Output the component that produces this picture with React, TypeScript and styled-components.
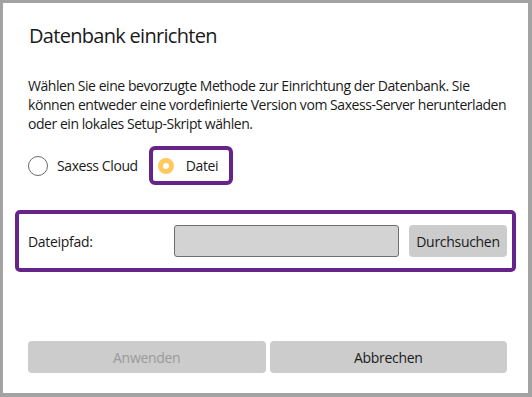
import React, { useState } from "react";
import styled, { createGlobalStyle } from "styled-components";

const GlobalStyle = createGlobalStyle`
  html, body {
    margin: 0;
    padding: 0;
  }
  body {
    font-family: "Open Sans", "Noto Sans", sans-serif;
    color: #1a1a1a;
  }
`;

type Source = "cloud" | "file";

function Radio({
  label,
  checked,
  onSelect,
}: {
  label: string;
  checked: boolean;
  onSelect: () => void;
}) {
  return (
    <StyledRadio onClick={onSelect}>
      <StyledRadioCircle $checked={checked} />
      <span>{label}</span>
    </StyledRadio>
  );
}

function App() {
  const [source, setSource] = useState<Source>("file");

  return (
    <StyledFrame>
      <GlobalStyle />
      <StyledDialog>
        <StyledTitle>Datenbank einrichten</StyledTitle>
        <StyledText>
          Wählen Sie eine bevorzugte Methode zur Einrichtung der Datenbank. Sie
          <br />
          können entweder eine vordefinierte Version vom Saxess-Server
          herunterladen
          <br />
          oder ein lokales Setup-Skript wählen.
        </StyledText>
        <StyledRadioRow>
          <Radio
            label="Saxess Cloud"
            checked={source === "cloud"}
            onSelect={() => setSource("cloud")}
          />
          <StyledHighlight>
            <Radio
              label="Datei"
              checked={source === "file"}
              onSelect={() => setSource("file")}
            />
          </StyledHighlight>
        </StyledRadioRow>
        <StyledPathBox>
          <StyledLabel>Dateipfad:</StyledLabel>
          <StyledInput readOnly />
          <StyledButton>Durchsuchen</StyledButton>
        </StyledPathBox>
        <StyledFooter>
          <StyledButton disabled>Anwenden</StyledButton>
          <StyledButton>Abbrechen</StyledButton>
        </StyledFooter>
      </StyledDialog>
    </StyledFrame>
  );
}

export default App;

const StyledFrame = styled.div`
  width: 532px;
  height: 397px;
  box-sizing: border-box;
  padding: 3px 4px 4px 3px;
  background: #a3a3a3;
  display: flex;
`;

const StyledDialog = styled.div`
  flex: 1;
  min-width: 0;
  background: #fff;
  display: flex;
  flex-direction: column;
  padding: 19px 21px 20px 25px;
`;

const StyledTitle = styled.h1`
  margin: 0;
  font-size: 20px;
  font-weight: 400;
  line-height: 28px;
  letter-spacing: -0.7px;
  padding-left: 1px;
`;

const StyledText = styled.p`
  margin: 26px 0 0;
  font-size: 14px;
  line-height: 19px;
  letter-spacing: -0.45px;
  white-space: nowrap;
`;

const StyledRadioRow = styled.div`
  display: flex;
  align-items: center;
  gap: 11px;
  margin-top: 13px;
`;

const StyledHighlight = styled.div`
  border: 4px solid #66248a;
  border-radius: 6px;
  padding: 0 11px 0 4px;
`;

const StyledRadio = styled.label`
  display: flex;
  align-items: center;
  gap: 10px;
  height: 31px;
  font-size: 14px;
  letter-spacing: -0.4px;
  cursor: pointer;
`;

const StyledRadioCircle = styled.span<{ $checked: boolean }>`
  box-sizing: border-box;
  width: ${(p) => (p.$checked ? "16px" : "20px")};
  height: ${(p) => (p.$checked ? "16px" : "20px")};
  margin: ${(p) => (p.$checked ? "0 2px 0 1px" : "0 -1px 0 0")};
  border-radius: 50%;
  border: ${(p) => (p.$checked ? "5px solid #ffc95c" : "1px solid #6a6a6a")};
  background: #fff;
`;

const StyledPathBox = styled.div`
  display: grid;
  grid-template-columns: 136px 1fr 98px;
  column-gap: 10px;
  align-items: center;
  margin: 25px -9px 0 -13px;
  padding: 11px 5px 11px 9px;
  border: 4px solid #66248a;
  border-radius: 5px;
`;

const StyledLabel = styled.span`
  font-size: 14px;
  letter-spacing: -0.3px;
`;

const StyledInput = styled.input`
  box-sizing: border-box;
  width: 100%;
  height: 32px;
  background: #d3d3d3;
  border: 1px solid #6e6e6e;
  border-radius: 3px;
  outline: none;
`;

const StyledButton = styled.button`
  flex: 1;
  height: 32px;
  border: none;
  border-radius: 4px;
  background: #cccccc;
  font-family: inherit;
  font-size: 14px;
  letter-spacing: -0.3px;
  color: #1a1a1a;
  padding: 0;

  &:disabled {
    color: #9a9a9a;
  }
`;

const StyledFooter = styled.div`
  display: flex;
  gap: 4px;
  margin-top: auto;
`;
